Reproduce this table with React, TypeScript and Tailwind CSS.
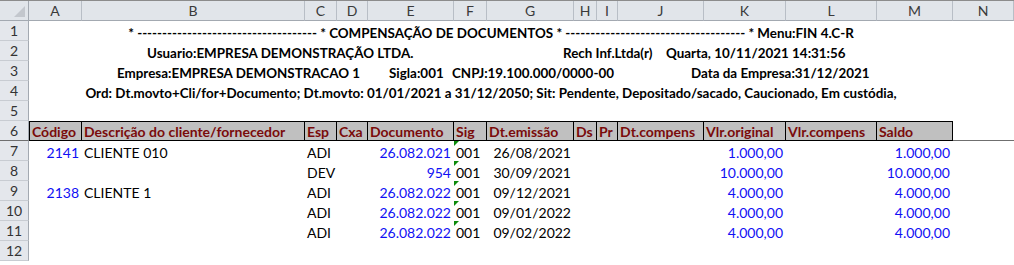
import React from "react";

const COLS = ["A", "B", "C", "D", "E", "F", "G", "H", "I", "J", "K", "L", "M", "N"];

const gridCols =
  "grid grid-cols-[29px_53px_223px_32px_31px_86px_33px_87px_23px_21px_86px_82px_91px_76px_1fr]";

interface DataRow {
  n: number;
  a?: string;
  b?: string;
  c: string;
  e: string;
  g: string;
  k: string;
  m: string;
}

const dataRows: DataRow[] = [
  { n: 7, a: "2141", b: "CLIENTE 010", c: "ADI", e: "26.082.021", g: "26/08/2021", k: "1.000,00", m: "1.000,00" },
  { n: 8, c: "DEV", e: "954", g: "30/09/2021", k: "10.000,00", m: "10.000,00" },
  { n: 9, a: "2138", b: "CLIENTE 1", c: "ADI", e: "26.082.022", g: "09/12/2021", k: "4.000,00", m: "4.000,00" },
  { n: 10, c: "ADI", e: "26.082.022", g: "09/01/2022", k: "4.000,00", m: "4.000,00" },
  { n: 11, c: "ADI", e: "26.082.022", g: "09/02/2022", k: "4.000,00", m: "4.000,00" },
];

const headers = [
  "Código",
  "Descrição do cliente/fornecedor",
  "Esp",
  "Cxa",
  "Documento",
  "Sig",
  "Dt.emissão",
  "Ds",
  "Pr",
  "Dt.compens",
  "Vlr.original",
  "Vlr.compens",
  "Saldo",
];

const RowHead: React.FC<{ n: number; dark?: boolean }> = ({ n, dark }) => (
  <div
    className={`h-[20px] flex items-center justify-center bg-[#e4e7ec] text-[#333] border-r border-r-[#a3a9b1] border-b ${
      dark ? "border-b-[#6f6f6f]" : "border-b-[#c8ccd2]"
    }`}
  >
    {n}
  </div>
);

const Cell: React.FC<{ children?: React.ReactNode; right?: boolean; blue?: boolean; mark?: boolean }> = ({
  children,
  right,
  blue,
  mark,
}) => (
  <div
    className={`relative h-[20px] flex items-end pb-[1px] whitespace-nowrap overflow-visible ${
      right ? "justify-end pr-[3px]" : "justify-start pl-[2px]"
    } ${blue ? "text-[#1010f4]" : "text-black"}`}
  >
    {mark && (
      <span className="absolute left-0 top-0 w-0 h-0 border-t-[5px] border-r-[5px] border-t-[#0a8a0a] border-r-transparent" />
    )}
    {children}
  </div>
);

export default function App() {
  return (
    <div
      className="w-[1014px] h-[265px] overflow-hidden bg-white text-[14px] leading-none"
      style={{ fontFamily: "Lato, 'Open Sans', sans-serif" }}
    >
      {/* column headers */}
      <div className={`${gridCols} h-[21px] border-t border-t-[#8c8c8c] bg-[#e1e5ea]`}>
        <div className="relative border-r border-r-[#a3a9b1] border-b border-b-[#a3a9b1]">
          <span className="absolute right-[3px] bottom-[3px] w-0 h-0 border-b-[11px] border-l-[11px] border-b-[#c3c7cd] border-l-transparent" />
        </div>
        {COLS.map((c) => (
          <div
            key={c}
            className="flex items-center justify-center text-[#3a3a3a] border-r border-r-[#b8bec6] border-b border-b-[#a3a9b1]"
          >
            {c}
          </div>
        ))}
      </div>

      {/* row 1 */}
      <div className={gridCols}>
        <RowHead n={1} />
        <div className="col-span-13 h-[20px] flex items-end justify-center pb-[1px] text-[13.4px] font-bold whitespace-nowrap">
          * ------------------------------------ * COMPENSAÇÃO DE DOCUMENTOS * ------------------------------------ * Menu:FIN 4.C-R
        </div>
        <div />
      </div>

      {/* row 2 */}
      <div className={gridCols}>
        <RowHead n={2} />
        <div className="col-span-13 h-[20px] flex items-end pb-[1px] pl-[118px] text-[13.4px] font-bold whitespace-nowrap">
          <span className="w-[416px]">Usuario:EMPRESA DEMONSTRAÇÃO LTDA.</span>
          <span className="w-[103px]">Rech Inf.Ltda(r)</span>
          <span>Quarta, 10/11/2021 14:31:56</span>
        </div>
        <div />
      </div>

      {/* row 3 */}
      <div className={gridCols}>
        <RowHead n={3} />
        <div className="col-span-13 h-[20px] flex items-end pb-[1px] pl-[88px] text-[13.4px] font-bold whitespace-nowrap">
          <span className="w-[272px]">Empresa:EMPRESA DEMONSTRACAO 1</span>
          <span className="w-[63px]">Sigla:001</span>
          <span className="w-[239px]">CNPJ:19.100.000/0000-00</span>
          <span>Data da Empresa:31/12/2021</span>
        </div>
        <div />
      </div>

      {/* row 4 */}
      <div className={gridCols}>
        <RowHead n={4} />
        <div className="col-span-13 h-[20px] flex items-end justify-center pb-[1px] text-[13.4px] font-bold whitespace-nowrap">
          Ord: Dt.movto+Cli/for+Documento; Dt.movto: 01/01/2021 a 31/12/2050; Sit: Pendente, Depositado/sacado,
          Caucionado, Em custódia,
        </div>
        <div />
      </div>

      {/* row 5 */}
      <div className={gridCols}>
        <RowHead n={5} />
      </div>

      {/* row 6 - table header */}
      <div className={gridCols}>
        <RowHead n={6} dark />
        {headers.map((h, i) => (
          <div
            key={h}
            className={`h-[20px] flex items-end pb-[1px] pl-[2px] bg-[#c0c0c0] text-[#7a0b0b] font-bold whitespace-nowrap overflow-hidden border-t border-b border-r border-black ${
              i === 0 ? "border-l" : ""
            }`}
          >
            {h}
          </div>
        ))}
        <div className="h-[20px] border-b border-b-[#6f6f6f]" />
      </div>

      {/* data rows */}
      {dataRows.map((r) => (
        <div key={r.n} className={gridCols}>
          <RowHead n={r.n} />
          <Cell right blue>
            {r.a}
          </Cell>
          <Cell>{r.b}</Cell>
          <Cell>{r.c}</Cell>
          <Cell />
          <Cell right blue>
            {r.e}
          </Cell>
          <Cell mark>001</Cell>
          <Cell right>{r.g}</Cell>
          <Cell />
          <Cell />
          <Cell />
          <Cell right blue>
            {r.k}
          </Cell>
          <Cell />
          <Cell right blue>
            {r.m}
          </Cell>
          <Cell />
        </div>
      ))}

      {/* row 12 */}
      <div className={gridCols}>
        <RowHead n={12} />
      </div>
    </div>
  );
}
